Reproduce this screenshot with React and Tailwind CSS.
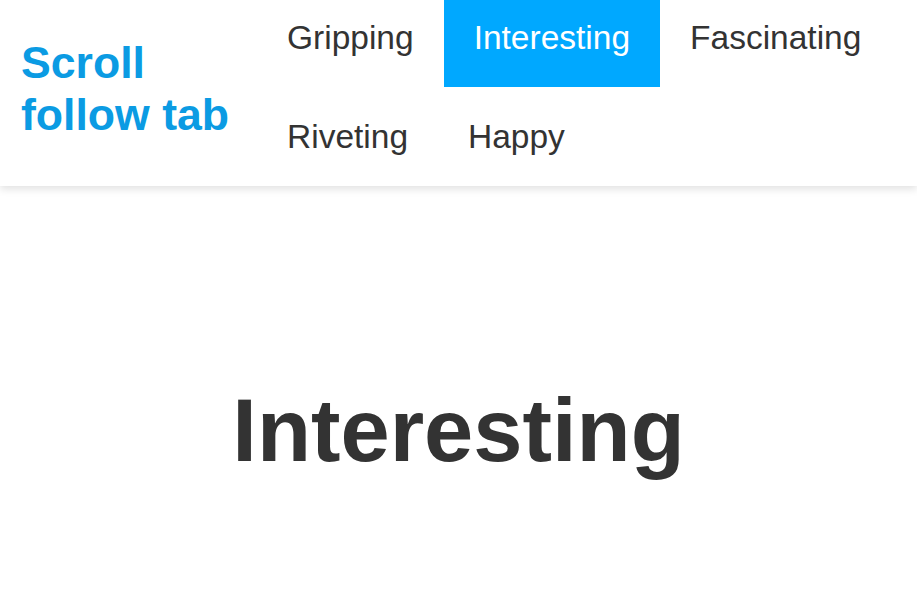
export default function App() {
  const items = ["Gripping", "Interesting", "Fascinating", "Riveting", "Happy"];
  return (
    <div className="min-h-[597px] bg-white font-['Liberation_Sans',Arial,sans-serif]">
      <header className="relative z-10 flex h-[186px] bg-white shadow-[0_3px_8px_rgba(0,0,0,0.12)]">
        <div className="flex w-[256px] shrink-0 items-center pb-[9px] pl-[21px]">
          <h1 className="w-[225px] text-[44.6px] font-bold leading-[52px] text-[#0b9be3]">
            Scroll follow tab
          </h1>
        </div>
        <nav className="flex flex-1 flex-wrap content-start gap-y-[12px] pl-[1px]">
          {items.map((t) => (
            <a
              key={t}
              className={
                t === "Interesting"
                  ? "block h-[87px] bg-[#00a8ff] px-[30px] pt-[19px] text-[33.5px] leading-[38px] text-white"
                  : "block h-[87px] px-[30px] pt-[19px] text-[33.5px] leading-[38px] text-[#333333]"
              }
            >
              {t}
            </a>
          ))}
        </nav>
      </header>
      <main className="flex justify-center pt-[195px]">
        <h2 className="text-[88.5px] font-bold leading-[100px] text-[#333333]">Interesting</h2>
      </main>
    </div>
  );
}
